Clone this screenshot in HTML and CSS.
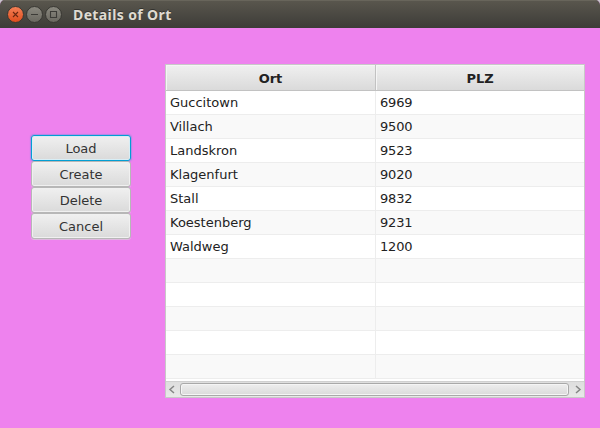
FILE: index.html
```html
<!DOCTYPE html>
<html lang="de">
<head>
<meta charset="utf-8">
<title>Details of Ort</title>
<link rel="stylesheet" href="styles.css">
</head>
<body>
<div class="window">
  <header class="titlebar">
    <svg class="controls" width="56" height="18" viewBox="0 0 56 18">
      <defs>
        <linearGradient id="close" x1="0" y1="0" x2="0" y2="1"><stop offset="0" stop-color="#f58157"/><stop offset="1" stop-color="#df4c1c"/></linearGradient>
        <linearGradient id="plain" x1="0" y1="0" x2="0" y2="1"><stop offset="0" stop-color="#8b8980"/><stop offset="1" stop-color="#69675f"/></linearGradient>
      </defs>
      <g stroke="#383732">
        <circle cx="8.5" cy="9.5" r="8" fill="url(#close)"/>
        <circle cx="27.5" cy="9.5" r="8" fill="url(#plain)"/>
        <circle cx="46.5" cy="9.5" r="8" fill="url(#plain)"/>
      </g>
      <g fill="none" stroke="#3c3b37" stroke-width="1.1">
        <path d="M6 7l5 5M11 7l-5 5" stroke="#6b2710"/>
        <path d="M24 9.5h7"/>
        <path d="M43.5 6.5h6v6h-6z"/>
      </g>
    </svg>
    <h1 class="title">Details of Ort</h1>
  </header>
  <main class="content">
    <div class="buttons">
      <button class="btn focused">Load</button>
      <button class="btn">Create</button>
      <button class="btn">Delete</button>
      <button class="btn">Cancel</button>
    </div>
    <div class="table">
      <div class="row head"><span>Ort</span><span>PLZ</span></div>
      <div class="rows">
        <div class="row"><span>Guccitown</span><span>6969</span></div>
        <div class="row"><span>Villach</span><span>9500</span></div>
        <div class="row"><span>Landskron</span><span>9523</span></div>
        <div class="row"><span>Klagenfurt</span><span>9020</span></div>
        <div class="row"><span>Stall</span><span>9832</span></div>
        <div class="row"><span>Koestenberg</span><span>9231</span></div>
        <div class="row"><span>Waldweg</span><span>1200</span></div>
        <div class="row"><span></span><span></span></div>
        <div class="row"><span></span><span></span></div>
        <div class="row"><span></span><span></span></div>
        <div class="row"><span></span><span></span></div>
        <div class="row"><span></span><span></span></div>
      </div>
      <div class="scrollbar">
        <svg width="14" height="15" viewBox="0 0 14 15"><path d="M8 4L4 7.5 8 11" fill="none" stroke="#858585" stroke-width="1.5"/></svg>
        <div class="thumb"></div>
        <svg width="15" height="15" viewBox="0 0 15 15"><path d="M7 4l4 3.5L7 11" fill="none" stroke="#858585" stroke-width="1.5"/></svg>
      </div>
    </div>
  </main>
</div>
</body>
</html>
```
FILE: styles.css
```css
* { box-sizing: border-box; }
body {
  margin: 0;
  background: #c8c6cc;
  font: 13px "DejaVu Sans", sans-serif;
  color: #222;
}
.window {
  width: 600px;
  height: 428px;
  border-radius: 5px 5px 0 0;
  overflow: hidden;
  background: #ee82ee;
}
.titlebar {
  height: 28px;
  display: flex;
  align-items: center;
  padding-left: 7px;
  gap: 10px;
  background: linear-gradient(#5a574e, #3d3c38);
  box-shadow: inset 0 1px #68655b;
}
.controls { display: block; }
.title {
  margin: 0;
  padding-top: 2px;
  font: bold 14px/26px "Noto Sans", sans-serif;
  letter-spacing: 0.38px;
  color: #dfdbd2;
  text-shadow: 0 -1px #33322e;
}
.content {
  display: flex;
  align-items: flex-start;
  padding: 36px 0 0 31px;
  gap: 34px;
}
.buttons {
  width: 100px;
  margin-top: 71px;
  display: flex;
  flex-direction: column;
}
.btn {
  height: 26px;
  padding: 1px 0 0;
  border: 1px solid #b7b7b7;
  border-radius: 3px;
  background: linear-gradient(#f0f0f0, #dadada);
  box-shadow: inset 0 0 0 1px #f0f0f0, 0 1px #e0b8e0;
  font: inherit;
  color: #333;
}
.focused {
  border-color: #039ed3;
  box-shadow: inset 0 0 0 1px #d8eef6, 0 0 1px 1px #039ed344;
}
.table {
  width: 420px;
  height: 334px;
  border: 1px solid #c8c8c8;
  background: #fff;
  display: flex;
  flex-direction: column;
}
.row {
  display: grid;
  grid-template-columns: 210px 1fr;
  height: 24px;
  line-height: 23px;
  border-bottom: 1px solid #ededed;
}
.row span { padding-left: 4px; }
.row span:first-child { border-right: 1px solid #ededed; }
.rows .row:nth-child(even) { background: #f9f9f9; }
.rows .row span:last-child { letter-spacing: -0.2px; }
.rows { height: 290px; }
.row.head {
  height: 26px;
  line-height: 27px;
  font-weight: bold;
  text-align: center;
  background: linear-gradient(#f0f0f0, #dadada);
  border-color: #c2c2c2;
}
.row.head span { height: 25px; padding: 0; box-shadow: inset 1px 1px #f5f5f5; }
.row.head span:first-child { border-color: #c2c2c2; }
.scrollbar {
  height: 16px;
  display: flex;
  align-items: center;
  border-top: 1px solid #d0d0d0;
  background: linear-gradient(#dedede, #e8e8e8);
}
.thumb {
  flex: 1;
  height: 13px;
  border: 1px solid #a9a9a9;
  border-radius: 3px;
  background: linear-gradient(#eee, #dadada);
  box-shadow: inset 0 0 0 1px #f5f5f5;
}
```
